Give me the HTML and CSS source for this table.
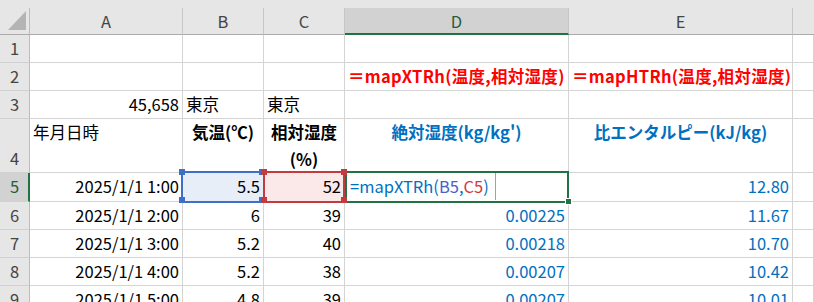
FILE: index.html
```html
<!DOCTYPE html>
<html lang="ja">
<head>
<meta charset="utf-8">
<title>Sheet</title>
<link rel="stylesheet" href="styles.css">
</head>
<body>
<div class="strip"></div>
<div class="sheet">
  <div class="corner"><span class="tri"></span></div>
  <div class="ch">A</div>
  <div class="ch">B</div>
  <div class="ch">C</div>
  <div class="ch sel">D</div>
  <div class="ch">E</div>
  <div class="ch last"></div>

  <div class="rh">1</div>
  <div class="c"></div><div class="c"></div><div class="c"></div><div class="c"></div><div class="c"></div><div class="c"></div>

  <div class="rh">2</div>
  <div class="c"></div><div class="c"></div><div class="c"></div>
  <div class="c l bold red">＝mapXTRh(温度,相対湿度)</div>
  <div class="c l bold red">＝mapHTRh(温度,相対湿度)</div>
  <div class="c"></div>

  <div class="rh">3</div>
  <div class="c r">45,658</div>
  <div class="c l">東京</div>
  <div class="c l">東京</div>
  <div class="c"></div><div class="c"></div><div class="c"></div>

  <div class="rh bottom">4</div>
  <div class="c l top">年月日時</div>
  <div class="c ctr top bold">気温(℃)</div>
  <div class="c ctr top bold wrap">相対湿度<br>(%)</div>
  <div class="c ctr top bold blue">絶対湿度(kg/kg')</div>
  <div class="c ctr top bold blue">比エンタルピー(kJ/kg)</div>
  <div class="c"></div>

  <div class="rh sel">5</div>
  <div class="c r">2025/1/1 1:00</div>
  <div class="c r ref-b">5.5</div>
  <div class="c r ref-c">52</div>
  <div class="c l active"><span class="edit"><span class="blue">=mapXTRh(</span><span class="fb">B5</span><span class="blue">,</span><span class="fc">C5</span><span class="blue">)</span></span></div>
  <div class="c r blue">12.80</div>
  <div class="c"></div>

  <div class="rh">6</div>
  <div class="c r">2025/1/1 2:00</div>
  <div class="c r">6</div>
  <div class="c r">39</div>
  <div class="c r blue">0.00225</div>
  <div class="c r blue">11.67</div>
  <div class="c"></div>

  <div class="rh">7</div>
  <div class="c r">2025/1/1 3:00</div>
  <div class="c r">5.2</div>
  <div class="c r">40</div>
  <div class="c r blue">0.00218</div>
  <div class="c r blue">10.70</div>
  <div class="c"></div>

  <div class="rh">8</div>
  <div class="c r">2025/1/1 4:00</div>
  <div class="c r">5.2</div>
  <div class="c r">38</div>
  <div class="c r blue">0.00207</div>
  <div class="c r blue">10.42</div>
  <div class="c"></div>

  <div class="rh">9</div>
  <div class="c r">2025/1/1 5:00</div>
  <div class="c r">4.8</div>
  <div class="c r">39</div>
  <div class="c r blue">0.00207</div>
  <div class="c r blue">10.01</div>
  <div class="c"></div>
</div>
</body>
</html>
```

FILE: styles.css
```css
html, body {
  margin: 0;
  padding: 0;
  background: #ffffff;
}
body {
  width: 814px;
  height: 302px;
  overflow: hidden;
  font-family: "Noto Sans CJK JP", "Noto Sans", sans-serif;
  font-size: 16.5px;
  color: #000;
}
.strip {
  height: 8px;
  background: #e6e6e6;
}
.sheet {
  display: grid;
  grid-template-columns: 30px 153px 81px 81px 224px 224px 21px;
  grid-template-rows: 27px 28px 28px 28px 54px 29px 28px 28px 28px 28px;
}
.sheet > div {
  box-sizing: border-box;
  white-space: nowrap;
}
.corner {
  position: relative;
  background: #e6e6e6;
  border-right: 1px solid #bcbcbc;
  border-bottom: 1px solid #ababab;
}
.tri {
  position: absolute;
  left: 8px;
  top: 3px;
  width: 0;
  height: 0;
  border-left: 18px solid transparent;
  border-bottom: 19px solid #b4b4b4;
}
.ch {
  background: #e6e6e6;
  border-right: 1px solid #c6c6c6;
  border-bottom: 1px solid #ababab;
  color: #444;
  text-align: center;
  line-height: 26px;
}
.ch.last { border-right: none; }
.ch.sel {
  background: #d2d2d2;
  color: #1f5f3c;
  border-bottom: 2px solid #217346;
}
.rh {
  background: #e6e6e6;
  border-right: 1px solid #bcbcbc;
  border-bottom: 1px solid #d0d0d0;
  color: #444;
  text-align: center;
  line-height: 27px;
}
.rh.bottom {
  display: flex;
  align-items: flex-end;
  justify-content: center;
}
.rh.sel {
  background: #d2d2d2;
  color: #1f5f3c;
  border-right: 2px solid #217346;
  padding-left: 1px;
}
.c {
  position: relative;
  border-right: 1px solid #d4d4d4;
  border-bottom: 1px solid #d4d4d4;
  line-height: 27px;
  overflow: visible;
}
.c.r { text-align: right; padding-right: 3px; }
.c.l { text-align: left; padding-left: 3px; }
.c.ctr { text-align: center; }
.c.top { line-height: 27px; }
.bold { font-weight: 700; }
.red { color: #ff0000; letter-spacing: 0.3px; }
.blue { color: #0070c0; }
.fb { color: #4a62c4; }
.fc { color: #d2383a; }

.ref-b { background: #e8eef8; }
.ref-c { background: #fbe8e8; }
.ref-b::after, .ref-c::after {
  content: "";
  position: absolute;
  left: -2px;
  top: -2px;
  right: -2px;
  bottom: -2px;
  border: 2px solid #3f6fc6;
  pointer-events: none;
}
.ref-c::after { border-color: #c23b3f; left: -1px; right: -1px; }
.ref-b::before, .ref-c::before {
  content: "";
  position: absolute;
  left: -4px;
  top: -4px;
  width: 6px;
  height: 6px;
  background: #3f6fc6;
  box-shadow: 80px 0 0 #3f6fc6, 0 28px 0 #3f6fc6, 80px 28px 0 #3f6fc6;
  z-index: 2;
}
.ref-c::before {
  left: -3px;
  background: #c23b3f;
  box-shadow: 80px 0 0 #c23b3f, 0 28px 0 #c23b3f, 80px 28px 0 #c23b3f;
}
.active::after {
  content: "";
  position: absolute;
  left: 0px;
  top: -2px;
  right: -1px;
  bottom: -2px;
  border: 2px solid #217346;
  pointer-events: none;
}
.active::before {
  content: "";
  position: absolute;
  right: -4px;
  bottom: -4px;
  width: 5px;
  height: 5px;
  background: #217346;
  border: 1px solid #fff;
  z-index: 3;
}
.edit {
  display: inline-block;
  padding-left: 2px;
  width: 148px;
  border-right: 1px solid #a0a0a0;
  height: 27px;
  box-sizing: border-box;
}
```
